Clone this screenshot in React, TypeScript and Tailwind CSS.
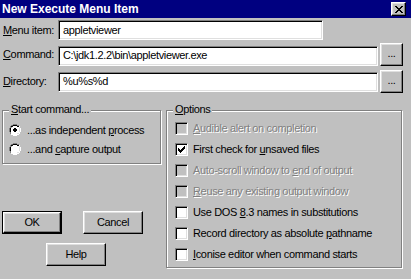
import React from "react";

const raised =
  "border border-t-white border-l-white border-r-black border-b-black shadow-[inset_-1px_-1px_0_#808080,inset_1px_1px_0_#dfdfdf] bg-[#c0c0c0]";
const sunken =
  "border border-t-[#808080] border-l-[#808080] border-r-white border-b-white shadow-[inset_1px_1px_0_#000,inset_-1px_-1px_0_#dfdfdf]";
const disabledText = "text-[#808080] [text-shadow:1px_1px_0_#fff]";

type Opt = { pre: string; key: string; post: string; checked?: boolean; disabled?: boolean };

const options: Opt[] = [
  { pre: "", key: "A", post: "udible alert on completion", disabled: true },
  { pre: "First check for ", key: "u", post: "nsaved files", checked: true },
  { pre: "Auto-scroll window to ", key: "e", post: "nd of output", disabled: true },
  { pre: "", key: "R", post: "euse any existing output window", disabled: true },
  { pre: "Use DOS ", key: "8", post: ".3 names in substitutions" },
  { pre: "Record directory as absolute ", key: "p", post: "athname" },
  { pre: "", key: "I", post: "conise editor when command starts" },
];

function Checkbox({ checked, disabled }: { checked?: boolean; disabled?: boolean }) {
  return (
    <div className={`w-[13px] h-[13px] shrink-0 flex items-center justify-center ${sunken} ${disabled ? "bg-[#c0c0c0]" : "bg-white"}`}>
      {checked && (
        <svg width="7" height="7" viewBox="0 0 7 7">
          <path d="M0 2h1v1h1v1h1v-1h1v-1h1v-1h1v-1h1v3h-1v1h-1v1h-1v1h-1v1h-1v-1h-1v-1h-1z" fill="#000" />
        </svg>
      )}
    </div>
  );
}

function Radio({ on }: { on?: boolean }) {
  return (
    <svg width="12" height="12" viewBox="0 0 12 12" className="shrink-0">
      <path d="M4 0h4v1h2v1h1v2h1v4h-1v2h-1v1h-2v1h-4v-1h-2v-1h-1v-2h-1v-4h1v-2h1v-1h2z" fill="#fff" />
      <path d="M4 0h4v1h2v1h-2v-1h-4v1h-2v2h-1v4h1v2h-1v-2h-1v-4h1v-2h1v-1h2z" fill="#808080" />
      <path d="M4 1h4v1h2v1h-2v-1h-4v1h-2v1h-0v0zM2 2h1v1h-1zM1 4h1v4h-1z" fill="#000" />
      <path d="M10 3h1v1h-1zM10 8h1v-4h-1zM9 9h1v1h-1zM4 10h4v-1h1v1h-1v0h-4z" fill="#dfdfdf" />
      {on && <path d="M5 4h2v1h1v2h-1v1h-2v-1h-1v-2h1z" fill="#000" />}
    </svg>
  );
}

function Btn({ children, className = "" }: { children: React.ReactNode; className?: string }) {
  return <div className={`flex items-center justify-center ${raised} ${className}`}>{children}</div>;
}

export default function App() {
  return (
    <div className="w-[411px] h-[279px] bg-[#c0c0c0] overflow-hidden font-['Liberation_Sans',Arial,sans-serif] text-[11px] tracking-[-0.35px] text-black leading-none">
      {/* title bar */}
      <div className="h-[18px] bg-[#000080] flex items-center justify-between pl-[2px] pr-[5px]">
        <span className="text-white font-bold text-[12px] tracking-[0px]">New Execute Menu Item</span>
        <Btn className="w-[15px] h-[14px]">
          <svg width="8" height="7" viewBox="0 0 8 7">
            <path d="M0 0h2v1h1v1h2v-1h1v-1h2v1h-1v1h-1v1h-1v1h1v1h1v1h1v1h-2v-1h-1v-1h-2v1h-1v1h-2v-1h1v-1h1v-1h1v-1h-1v-1h-1v-1h-1z" fill="#000" />
          </svg>
        </Btn>
      </div>

      {/* fields */}
      <div className="flex items-center mt-[2px] h-[20px]">
        <span className="w-[58px] pl-[3px]"><u>M</u>enu item:</span>
        <div className={`w-[265px] h-[20px] bg-white flex items-center pl-[4px] ${sunken}`}>appletviewer</div>
      </div>
      <div className="flex items-center mt-[3px] h-[23px]">
        <span className="w-[58px] pl-[3px]"><u>C</u>ommand:</span>
        <div className={`w-[320px] h-[20px] mt-[2px] bg-white flex items-center pl-[4px] ${sunken}`}>C:\jdk1.2.2\bin\appletviewer.exe</div>
        <Btn className="w-[23px] h-[23px] ml-[2px] pb-[2px]">...</Btn>
      </div>
      <div className="flex items-center mt-[4px] h-[23px]">
        <span className="w-[58px] pl-[3px]"><u>D</u>irectory:</span>
        <div className={`w-[320px] h-[20px] bg-white flex items-center pl-[4px] ${sunken}`}>%u%s%d</div>
        <Btn className="w-[23px] h-[23px] ml-[2px] pb-[2px]">...</Btn>
      </div>

      {/* lower area */}
      <div className="flex mt-[17px] pl-[2px]">
        <div className="w-[159px] flex flex-col">
          <div className="relative h-[54px] border border-[#808080] shadow-[inset_1px_1px_0_#fff,1px_1px_0_#fff] pl-[6px] pt-[13px] flex flex-col gap-[7px]">
            <span className="absolute -top-[7px] left-[6px] px-[2px] bg-[#c0c0c0]"><u>S</u>tart command...</span>
            <div className="flex items-center gap-[6px]">
              <Radio on />
              <span>...as independent <u>p</u>rocess</span>
            </div>
            <div className="flex items-center gap-[6px]">
              <Radio />
              <span>...and <u>c</u>apture output</span>
            </div>
          </div>
          <div className="flex gap-[21px] mt-[47px]">
            <div className="border border-black">
              <Btn className="w-[58px] h-[21px]">OK</Btn>
            </div>
            <Btn className="w-[60px] h-[23px]">Cancel</Btn>
          </div>
          <Btn className="w-[60px] h-[23px] ml-[44px] mt-[9px]">Help</Btn>
        </div>

        <div className="relative ml-[5px] w-[236px] h-[158px] border border-[#808080] shadow-[inset_1px_1px_0_#fff,1px_1px_0_#fff] pl-[8px] pt-[7px] flex flex-col">
          <span className="absolute -top-[7px] left-[6px] px-[2px] bg-[#c0c0c0]"><u>O</u>ptions</span>
          {options.map((o) => (
            <div key={o.post} className="h-[21px] flex items-center gap-[5px]">
              <Checkbox checked={o.checked} disabled={o.disabled} />
              <span className={o.disabled ? disabledText : ""}>
                {o.pre}
                <u>{o.key}</u>
                {o.post}
              </span>
            </div>
          ))}
        </div>
      </div>
    </div>
  );
}
